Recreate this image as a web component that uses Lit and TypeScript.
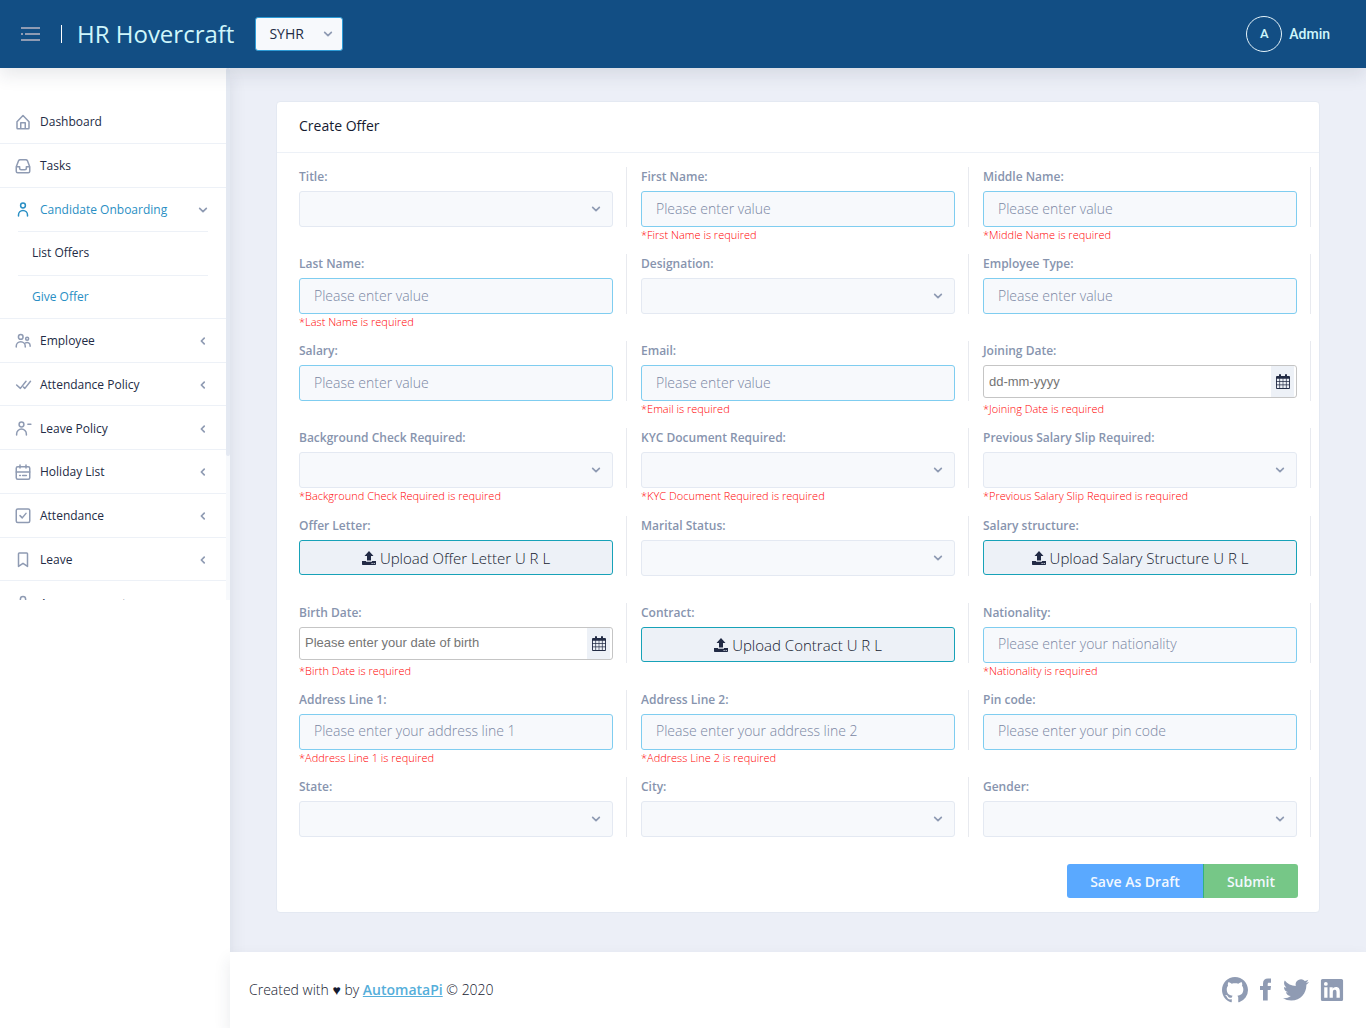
import { LitElement, html, css, svg, nothing } from "lit";
import { customElement } from "lit/decorators.js";
import { classMap } from "lit/directives/class-map.js";

type Kind = "text" | "select" | "date" | "upload";
interface Field {
  id: string;
  label: string;
  kind: Kind;
  hint?: string;
  error?: string;
}
interface MenuItem {
  label: string;
  icon: string;
  active?: boolean;
  parent?: boolean;
  children?: { label: string; active?: boolean }[];
}

const FIELDS: Field[] = [
  { id: "title", label: "Title:", kind: "select" },
  { id: "first", label: "First Name:", kind: "text", hint: "Please enter value", error: "*First Name is required" },
  { id: "middle", label: "Middle Name:", kind: "text", hint: "Please enter value", error: "*Middle Name is required" },
  { id: "last", label: "Last Name:", kind: "text", hint: "Please enter value", error: "*Last Name is required" },
  { id: "designation", label: "Designation:", kind: "select" },
  { id: "emptype", label: "Employee Type:", kind: "text", hint: "Please enter value" },
  { id: "salary", label: "Salary:", kind: "text", hint: "Please enter value" },
  { id: "email", label: "Email:", kind: "text", hint: "Please enter value", error: "*Email is required" },
  { id: "joining", label: "Joining Date:", kind: "date", hint: "dd-mm-yyyy", error: "*Joining Date is required" },
  { id: "background", label: "Background Check Required:", kind: "select", error: "*Background Check Required is required" },
  { id: "kyc", label: "KYC Document Required:", kind: "select", error: "*KYC Document Required is required" },
  { id: "slip", label: "Previous Salary Slip Required:", kind: "select", error: "*Previous Salary Slip Required is required" },
  { id: "offer", label: "Offer Letter:", kind: "upload", hint: "Upload Offer Letter U R L" },
  { id: "marital", label: "Marital Status:", kind: "select" },
  { id: "structure", label: "Salary structure:", kind: "upload", hint: "Upload Salary Structure U R L" },
  { id: "birth", label: "Birth Date:", kind: "date", hint: "Please enter your date of birth", error: "*Birth Date is required" },
  { id: "contract", label: "Contract:", kind: "upload", hint: "Upload Contract U R L" },
  { id: "nationality", label: "Nationality:", kind: "text", hint: "Please enter your nationality", error: "*Nationality is required" },
  { id: "address1", label: "Address Line 1:", kind: "text", hint: "Please enter your address line 1", error: "*Address Line 1 is required" },
  { id: "address2", label: "Address Line 2:", kind: "text", hint: "Please enter your address line 2", error: "*Address Line 2 is required" },
  { id: "pin", label: "Pin code:", kind: "text", hint: "Please enter your pin code" },
  { id: "state", label: "State:", kind: "select" },
  { id: "city", label: "City:", kind: "select" },
  { id: "gender", label: "Gender:", kind: "select" },
];

const MENU: MenuItem[] = [
  { label: "Dashboard", icon: "home" },
  { label: "Tasks", icon: "inbox" },
  {
    label: "Candidate Onboarding",
    icon: "person",
    active: true,
    children: [{ label: "List Offers" }, { label: "Give Offer", active: true }],
  },
  { label: "Employee", icon: "people", parent: true },
  { label: "Attendance Policy", icon: "doneAll", parent: true },
  { label: "Leave Policy", icon: "personRemove", parent: true },
  { label: "Holiday List", icon: "calendar", parent: true },
  { label: "Attendance", icon: "check", parent: true },
  { label: "Leave", icon: "bookmark", parent: true },
  { label: "Announcement", icon: "mic", parent: true },
];

const ICONS: Record<string, unknown> = {
  home: svg`<path d="M4 11.600 12 3.300l8 8.300V20a1 1 0 0 1-1 1H5a1 1 0 0 1-1-1zM9 21v-8h6v8"/>`,
  inbox: svg`<path d="M3 13l3.200-8.200A2.200 2.200 0 0 1 8.200 3.500h7.600a2.200 2.200 0 0 1 2 1.300L21 13v6a2 2 0 0 1-2 2H5a2 2 0 0 1-2-2zM3 13h4.500v2a2 2 0 0 0 2 2h5a2 2 0 0 0 2-2V13H21"/>`,
  person: svg`<circle cx="12" cy="6" r="3.200"/><path d="M6 20v-1.500a6 6 0 0 1 12 0V20"/>`,
  people: svg`<circle cx="9" cy="6.500" r="3.100"/><circle cx="17.500" cy="9" r="2"/><path d="M3 20v-1a6 6 0 0 1 12 0v1M15.500 14.600A4 4 0 0 1 21.500 18v1"/>`,
  doneAll: svg`<path d="M16 7l-7.500 9.500L3.500 12M22 7l-7.500 9.500-1.800-1.700"/>`,
  personRemove: svg`<circle cx="10" cy="6" r="3.200"/><path d="M3.500 20v-1.500a6 6 0 0 1 13 0V20M18.500 5.500h4"/>`,
  calendar: svg`<rect x="3" y="5" width="18" height="16.500" rx="2"/><path d="M8 2.500v4M16 2.500v4M3 12h18M7.500 16.800h1M11.500 16.800h5"/>`,
  check: svg`<rect x="3" y="2.500" width="18" height="18" rx="2"/><path d="M8 11.500l3 3 5-6"/>`,
  bookmark: svg`<path d="M6 20.500v-17a1 1 0 0 1 1-1h10a1 1 0 0 1 1 1v17l-6-4z"/>`,
  mic: svg`<rect x="8.500" y="2" width="7" height="13" rx="3.500"/><path d="M5.500 11a6.500 6.500 0 0 0 13 0M12 18v3"/>`,
};

const chevron = (dir: "down" | "left") => html`
  <svg class="chevron" viewBox="0 0 12 12" aria-hidden="true">
    <path d=${dir === "down" ? "M2 4l4 4 4-4" : "M7.500 2.500L4 6l3.500 3.500"} />
  </svg>
`;

const calendarGlyph = html`
  <svg class="cal" viewBox="0 0 14 15" aria-hidden="true">
    <path
      fill-rule="evenodd"
      d="M1 2h2V1a1 1 0 0 1 2 0v1h4V1a1 1 0 0 1 2 0v1h2a1 1 0 0 1 1 1v11a1 1 0 0 1-1 1H1a1 1 0 0 1-1-1V3a1 1 0 0 1 1-1zM.9 4.800v2.500h2.500V4.800zm3.200 0v2.500h2.600V4.800zm3.200 0v2.500h2.600V4.800zm3.300 0v2.500h2.500V4.800zM.9 8v2.500h2.500V8zm3.200 0v2.500h2.600V8zm3.200 0v2.500h2.600V8zm3.300 0v2.500h2.500V8zM.9 11.200v2.900h2.500v-2.900zm3.200 0v2.900h2.600v-2.900zm3.200 0v2.900h2.600v-2.900zm3.300 0v2.900h2.500v-2.900z"
    />
  </svg>
`;

const uploadGlyph = html`
  <svg class="up" viewBox="0 0 14 14" aria-hidden="true">
    <path d="M7 0l4.500 5H9v4.500H5V5H2.500zM0 10h4v.8h6V10h4v3.300a.7.7 0 0 1-.7.7H.7a.7.7 0 0 1-.7-.7z" />
    <path class="dots" d="M9.600 12.100h1v1h-1zM11.700 12.100h1v1h-1z" />
  </svg>
`;

@customElement("app-root")
export class AppRoot extends LitElement {
  static styles = css`
    :host {
      display: block;
      min-height: 100vh;
      background: #fff;
      color: #222b45;
      font-family: "Open Sans", "Noto Sans", sans-serif;
      font-size: 14px;
      line-height: 20px;
    }
    * {
      box-sizing: border-box;
    }
    button,
    input,
    select {
      font-family: inherit;
      font-size: 14px;
      line-height: 20px;
      color: inherit;
      margin: 0;
    }
    a {
      color: inherit;
      text-decoration: none;
    }
    svg {
      display: block;
      flex: none;
    }
    .page {
      display: flex;
      flex-direction: column;
      min-height: 100vh;
    }
    .top {
      position: relative;
      z-index: 3;
      display: flex;
      align-items: center;
      height: 68px;
      padding: 0 36px 0 20px;
      background: #124e84;
      box-shadow: 0 8px 16px rgba(44, 51, 73, 0.1);
    }
    .toggle {
      padding: 0;
      border: 0;
      background: none;
      color: #8f9bb3;
      cursor: pointer;
    }
    .toggle svg {
      width: 21px;
      height: 14px;
      fill: currentColor;
    }
    .brand {
      display: flex;
      align-items: center;
      gap: 15px;
      margin: 0 21px 0 20px;
      color: #cff6fb;
      font-size: 24px;
      font-weight: 500;
      line-height: 32px;
      white-space: nowrap;
    }
    .brand::before {
      content: "";
      width: 1px;
      height: 18px;
      background: #fff;
    }
    .pick {
      display: grid;
      align-items: center;
      width: 88px;
    }
    .pick > *,
    .choice > * {
      grid-area: 1 / 1;
    }
    .pick select {
      width: 100%;
      height: 34px;
      padding: 0 13px;
      border: 1px solid #2c9bd6;
      border-radius: 3px;
      background: #f7f9fc;
      font-weight: 500;
      appearance: none;
    }
    .chevron {
      width: 10px;
      height: 10px;
      fill: none;
      stroke: #8f9bb3;
      stroke-width: 2;
      stroke-linecap: round;
      stroke-linejoin: round;
    }
    .pick .chevron,
    .choice .chevron {
      justify-self: end;
      pointer-events: none;
    }
    .pick .chevron {
      margin-right: 10px;
    }
    .user {
      display: flex;
      align-items: center;
      gap: 7px;
      margin-left: auto;
      color: #cff6fb;
      font-family: Roboto, sans-serif;
      font-weight: 500;
    }
    .avatar {
      display: grid;
      place-items: center;
      width: 36px;
      height: 36px;
      border: 1px solid #e4f3fa;
      border-radius: 50%;
      font-size: 13px;
    }
    .body {
      flex: 1;
      display: flex;
    }
    .side {
      position: relative;
      z-index: 1;
      flex: none;
      width: 230px;
      background: #fff;
      box-shadow: 0 8px 16px rgba(44, 51, 73, 0.1);
    }
    .scroller {
      display: flex;
      height: 532px;
      overflow: hidden;
    }
    .menu {
      flex: 1;
      display: grid;
      grid-template-rows: repeat(12, 1fr);
      height: 557px;
      margin: 0;
      padding: 32px 0 0;
      list-style: none;
      font-size: 12px;
      font-weight: 500;
    }
    .menu li {
      display: grid;
    }
    .menu .group {
      grid-row: span 3;
      grid-template-rows: 1fr 2fr;
    }
    .menu ul {
      display: grid;
      grid-template-rows: 1fr 1fr;
      margin: 0;
      padding: 0 18px;
      list-style: none;
      border-bottom: 1px solid #edf1f7;
    }
    .item {
      display: flex;
      align-items: center;
      gap: 8px;
      padding: 2px 18px 0 14px;
      border-bottom: 1px solid #edf1f7;
    }
    .item.open {
      border-bottom: 0;
    }
    .item .chevron {
      margin-left: auto;
    }
    .item .glyph {
      width: 18px;
      height: 18px;
      fill: none;
      stroke: #8f9bb3;
      stroke-width: 2;
      stroke-linecap: round;
      stroke-linejoin: round;
    }
    .on,
    .item.on {
      color: #2a8fc4;
    }
    .item.on .glyph {
      stroke: #2a8fc4;
    }
    .sub {
      display: flex;
      align-items: center;
      padding: 0 14px;
      border-top: 1px solid #edf1f7;
    }
    .track {
      flex: none;
      width: 4px;
      background: #f7f9fc;
    }
    .thumb {
      height: 388px;
      border-radius: 2px;
      background: #e4e9f2;
    }
    .main {
      flex: 1;
      display: flex;
      flex-direction: column;
      min-width: 0;
      background: #eceff7;
    }
    .content {
      flex: 1;
      padding: 33px 46px 39px;
    }
    .card {
      border: 1px solid #e4e9f2;
      border-radius: 4px;
      background: #fff;
    }
    .card h1 {
      margin: 0;
      padding: 14px 22px 16px;
      border-bottom: 1px solid #edf1f7;
      font-size: 14px;
      font-weight: 500;
      line-height: 20px;
      color: #151a30;
    }
    .grid {
      display: grid;
      grid-template-columns: repeat(3, 1fr);
      grid-auto-rows: 1fr;
      min-height: 711px;
      padding: 14px 8px 0;
    }
    .cell {
      height: 60px;
      padding: 0 13px 0 14px;
      border-right: 1px solid #e8eaef;
    }
    .cell label {
      display: block;
      padding-bottom: 4px;
      color: #8794ae;
      font-size: 12px;
      font-weight: 600;
    }
    .err {
      margin: 0;
      padding-left: 14px;
      color: #f00;
      font-size: 11px;
      font-weight: 350;
      line-height: 16px;
    }
    .text,
    .choice select {
      display: block;
      width: 100%;
      height: 36px;
      padding: 0 14px 2px;
      border: 1px solid #e4e9f2;
      border-radius: 3px;
      background: #f7f9fc;
    }
    .text {
      border-color: #7fcdf0;
      font-weight: 300;
    }
    .text::placeholder {
      color: #7a87a3;
      opacity: 1;
    }
    .choice {
      display: grid;
      align-items: center;
    }
    .choice select {
      appearance: none;
    }
    .choice .chevron {
      margin-right: 12px;
    }
    .date {
      display: flex;
      height: 33px;
      padding-right: 2px;
      border: 1px solid #c5c5c5;
      border-radius: 3px;
      background: #fff;
    }
    .date input {
      flex: 1;
      min-width: 0;
      padding: 0 5px;
      border: 0;
      background: none;
      font-family: "Liberation Sans", Arial, sans-serif;
      font-size: 13px;
    }
    .date input::placeholder {
      color: #757575;
      opacity: 1;
    }
    .date button {
      display: grid;
      place-items: center;
      width: 23px;
      padding: 0;
      border: 0;
      background: #edf1f7;
    }
    .cal {
      width: 14px;
      height: 15px;
      fill: #222b45;
    }
    .upload {
      display: flex;
      align-items: center;
      justify-content: center;
      gap: 4px;
      width: 100%;
      height: 35px;
      padding: 2px 0 0;
      border: 1px solid #17a2b8;
      border-radius: 3px;
      background: #edf1f7;
      color: #151a30;
      font-size: 15px;
      font-weight: 300;
    }
    .up {
      width: 14px;
      height: 14px;
      fill: #222b45;
    }
    .dots {
      fill: #edf1f7;
    }
    .actions {
      display: flex;
      justify-content: flex-end;
      padding: 0 21px 14px;
    }
    .actions button {
      height: 34px;
      padding: 2px 23px 0;
      border: 0;
      color: #f2f8ff;
      font-weight: 600;
    }
    .draft {
      border-radius: 3px 0 0 3px;
      background: #5aa9ff;
    }
    .actions .submit {
      border-left: 1px solid #34b27c;
      border-radius: 0 3px 3px 0;
      background: #76c787;
    }
    .foot {
      position: relative;
      z-index: 2;
      display: flex;
      align-items: center;
      justify-content: space-between;
      min-height: 76px;
      padding: 0 22px 0 19px;
      background: #fff;
      box-shadow: 0 8px 16px rgba(44, 51, 73, 0.1);
    }
    .foot p {
      margin: 0;
      color: #151a30;
      font-weight: 300;
    }
    .foot p a {
      color: #55aeda;
      font-weight: 600;
      text-decoration: underline;
    }
    .social {
      display: flex;
      align-items: center;
      gap: 11px;
    }
    .social svg {
      height: 26px;
      fill: #8f9bb3;
    }
  `;

  private control(f: Field) {
    switch (f.kind) {
      case "text":
        return html`<input class="text" id=${f.id} type="text" placeholder=${f.hint ?? ""} />`;
      case "select":
        return html`<div class="choice"><select id=${f.id}><option></option></select>${chevron("down")}</div>`;
      case "date":
        return html`<div class="date">
          <input id=${f.id} type="text" placeholder=${f.hint ?? ""} />
          <button type="button" aria-label="Open calendar">${calendarGlyph}</button>
        </div>`;
      default:
        return html`<button class="upload" id=${f.id} type="button">${uploadGlyph}<span>${f.hint}</span></button>`;
    }
  }

  private field(f: Field) {
    return html`<div class="field">
      <div class="cell"><label for=${f.id}>${f.label}</label>${this.control(f)}</div>
      ${f.error ? html`<p class="err">${f.error}</p>` : nothing}
    </div>`;
  }

  private menuItem(m: MenuItem) {
    return html`<li class=${classMap({ group: !!m.children })}>
      <a href="#" class=${classMap({ item: true, on: !!m.active, open: !!m.children })}>
        <svg class="glyph" viewBox="0 0 24 24" aria-hidden="true">${ICONS[m.icon]}</svg>
        <span>${m.label}</span>
        ${m.children ? chevron("down") : m.parent ? chevron("left") : nothing}
      </a>
      ${m.children
        ? html`<ul>
            ${m.children.map((c) => html`<li><a href="#" class=${classMap({ sub: true, on: !!c.active })}>${c.label}</a></li>`)}
          </ul>`
        : nothing}
    </li>`;
  }

  render() {
    return html`
      <div class="page">
        <header class="top">
          <button class="toggle" type="button" aria-label="Toggle menu">
            <svg viewBox="0 0 21 14"><path d="M1 0h19v2H1zM1 6h2v2H1zM5 6h15v2H5zM1 12h19v2H1z" /></svg>
          </button>
          <a class="brand" href="#">HR Hovercraft</a>
          <div class="pick">
            <select aria-label="Company"><option>SYHR</option></select>
            ${chevron("down")}
          </div>
          <div class="user"><span class="avatar">A</span><span>Admin</span></div>
        </header>
        <div class="body">
          <nav class="side">
            <div class="scroller">
              <ul class="menu">${MENU.map((m) => this.menuItem(m))}</ul>
              <div class="track"><div class="thumb"></div></div>
            </div>
          </nav>
          <div class="main">
            <main class="content">
              <form class="card">
                <h1>Create Offer</h1>
                <div class="grid">${FIELDS.map((f) => this.field(f))}</div>
                <div class="actions">
                  <button class="draft" type="button">Save As Draft</button>
                  <button class="submit" type="button">Submit</button>
                </div>
              </form>
            </main>
            <footer class="foot">
              <p>Created with ♥ by <a href="#">AutomataPi</a> © 2020</p>
              <div class="social">
                <a href="#" aria-label="GitHub">
                  <svg width="26" viewBox="0 0 16 16"><path d="M8 0C3.580 0 0 3.580 0 8c0 3.540 2.290 6.530 5.470 7.590.4.070.55-.17.55-.38 0-.19-.01-.82-.01-1.490-2.010.37-2.530-.49-2.690-.94-.09-.23-.48-.94-.82-1.130-.28-.15-.68-.52-.01-.53.63-.01 1.080.58 1.230.82.72 1.210 1.870.87 2.330.66.07-.52.28-.87.51-1.070-1.780-.2-3.640-.89-3.640-3.950 0-.87.31-1.590.82-2.150-.08-.2-.36-1.020.08-2.120 0 0 .67-.21 2.200.82.64-.18 1.320-.27 2-.27s1.360.09 2 .27c1.530-1.040 2.200-.82 2.200-.82.44 1.100.16 1.920.08 2.120.51.56.82 1.270.82 2.150 0 3.070-1.870 3.750-3.650 3.950.29.25.54.73.54 1.480 0 1.070-.01 1.930-.01 2.200 0 .21.15.46.55.38A8.010 8.010 0 0 0 16 8c0-4.420-3.580-8-8-8z"/></svg>
                </a>
                <a href="#" aria-label="Facebook">
                  <svg width="13" viewBox="0 0 13 26"><path d="M12 1.500v4.200H9.800C8.900 5.700 8.700 6.300 8.700 7.300v1.700H12l-.5 4H8.700V23.500H4V13H1V9h3V6.500C4 3.300 5.900 1.500 9 1.500c1.400 0 2.500 0 3 0z"/></svg>
                </a>
                <a href="#" aria-label="Twitter">
                  <svg width="26" viewBox="0 0 24 24"><path d="M23.953 4.570a10 10 0 0 1-2.825.775 4.958 4.958 0 0 0 2.163-2.723c-.951.555-2.005.959-3.127 1.184a4.920 4.920 0 0 0-8.384 4.482C7.690 8.095 4.067 6.130 1.640 3.162a4.822 4.822 0 0 0-.666 2.475c0 1.710.87 3.213 2.188 4.096a4.904 4.904 0 0 1-2.228-.616v.06a4.923 4.923 0 0 0 3.946 4.827 4.996 4.996 0 0 1-2.212.085 4.936 4.936 0 0 0 4.604 3.417 9.867 9.867 0 0 1-6.102 2.105c-.39 0-.779-.023-1.170-.067a13.995 13.995 0 0 0 7.557 2.209c9.053 0 13.998-7.496 13.998-13.985 0-.21 0-.42-.015-.63A9.935 9.935 0 0 0 24 4.590z"/></svg>
                </a>
                <a href="#" aria-label="LinkedIn">
                  <svg width="24" viewBox="-1 -1 26 26"><path d="M20.447 20.452h-3.554v-5.569c0-1.328-.027-3.037-1.852-3.037-1.853 0-2.136 1.445-2.136 2.939v5.667H9.351V9h3.414v1.561h.046c.477-.9 1.637-1.850 3.370-1.850 3.601 0 4.267 2.370 4.267 5.455v6.286zM5.337 7.433a2.062 2.062 0 0 1-2.063-2.065 2.064 2.064 0 1 1 2.063 2.065zm1.782 13.019H3.555V9h3.564v11.452zM22.225 0H1.771C.792 0 0 .774 0 1.729v20.542C0 23.227.792 24 1.771 24h20.451C23.200 24 24 23.227 24 22.271V1.729C24 .774 23.200 0 22.222 0h.003z"/></svg>
                </a>
              </div>
            </footer>
          </div>
        </div>
      </div>
    `;
  }
}
